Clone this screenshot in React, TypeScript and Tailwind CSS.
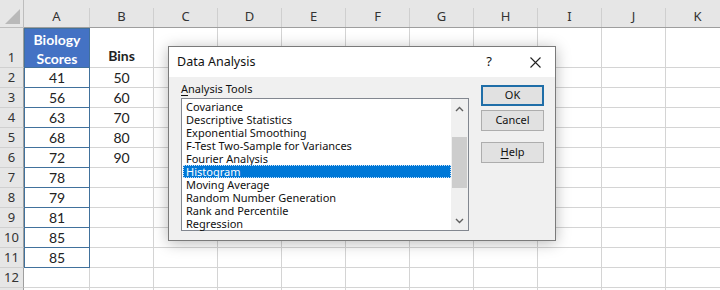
const cols = ["A", "B", "C", "D", "E", "F", "G", "H", "I", "J", "K"];
const colA = ["41", "56", "63", "68", "72", "78", "79", "81", "85", "85"];
const colB = ["50", "60", "70", "80", "90"];
const tools = [
  "Covariance",
  "Descriptive Statistics",
  "Exponential Smoothing",
  "F-Test Two-Sample for Variances",
  "Fourier Analysis",
  "Histogram",
  "Moving Average",
  "Random Number Generation",
  "Rank and Percentile",
  "Regression",
];

function Chevron({ up }: { up?: boolean }) {
  return (
    <svg width="9" height="6" viewBox="0 0 9 6" fill="none" stroke="#606060" strokeWidth="1.4">
      {up ? <path d="M1 5l3.5-3.5L8 5" /> : <path d="M1 1l3.5 3.5L8 1" />}
    </svg>
  );
}

function Sheet() {
  const rows = Array.from({ length: 13 }, (_, i) => i + 1);
  return (
    <div className="flex flex-col font-['Lato','Liberation_Sans',sans-serif] text-[14px] text-[#222]">
      {/* column headers */}
      <div className="flex h-[28px] shrink-0">
        <div className="relative w-[24px] shrink-0 border-r border-b border-[#bdbdbd] bg-[#e6e6e6]">
          <svg className="absolute right-[3px] bottom-[3px]" width="15" height="15" viewBox="0 0 15 15">
            <path d="M15 0V15H0Z" fill="#b9b9b9" />
          </svg>
        </div>
        {cols.map((c, i) => (
          <div
            key={c}
            className={`flex shrink-0 items-end border-b border-[#9e9e9e] bg-[#e6e6e6] font-['Noto_Sans',sans-serif] text-[13px] text-[#333] ${
              i === 0 ? "w-[66px]" : "w-[64px]"
            }`}
          >
            <div className="flex h-[19px] w-full items-center justify-center border-r border-[#cfcfcf] pb-[2px]">
              {c}
            </div>
          </div>
        ))}
      </div>
      {rows.map((r) => (
        <div key={r} className={`flex shrink-0 ${r === 1 ? "h-[40px]" : "h-[20px]"}`}>
          <div className="flex w-[24px] shrink-0 items-end justify-center border-r border-b border-r-[#9e9e9e] border-b-[#d0d0d0] bg-[#e6e6e6] pb-[1px] font-['Noto_Sans',sans-serif] text-[13px] leading-[18px] text-[#333]">
            {r <= 12 ? r : ""}
          </div>
          {cols.map((c, i) => {
            const w = i === 0 ? "w-[66px]" : "w-[64px]";
            if (i === 0 && r === 1) {
              return (
                <div
                  key={c}
                  className="flex w-[66px] shrink-0 flex-col items-center justify-center border border-[#41719c] bg-[#4472c4] pt-[1px] text-[14px] leading-[19px] font-bold text-white"
                >
                  <span>Biology</span>
                  <span>Scores</span>
                </div>
              );
            }
            if (i === 0 && r <= 11) {
              return (
                <div
                  key={c}
                  className="flex w-[66px] shrink-0 items-center justify-center border-x border-b border-[#41719c]"
                >
                  {colA[r - 2]}
                </div>
              );
            }
            if (i === 1 && r === 1) {
              return (
                <div
                  key={c}
                  className="flex w-[64px] shrink-0 items-end justify-center border-r border-b border-[#d4d4d4] pb-[1px] font-bold"
                >
                  Bins
                </div>
              );
            }
            return (
              <div
                key={c}
                className={`flex ${w} shrink-0 items-center justify-center border-r border-b border-[#d4d4d4]`}
              >
                {i === 1 && r >= 2 && r <= 6 ? colB[r - 2] : ""}
              </div>
            );
          })}
        </div>
      ))}
    </div>
  );
}

function Dialog() {
  return (
    <div className="absolute left-[168px] top-[46px] flex h-[195px] w-[388px] flex-col border border-[#7a7a7a] bg-[#f0f0f0] font-['Noto_Sans',sans-serif] text-[#111] shadow-[0_2px_14px_rgba(0,0,0,0.28)]">
      <div className="flex h-[30px] shrink-0 items-center bg-white pl-[8px] pr-[14px]">
        <span className="text-[12.5px]">Data Analysis</span>
        <span className="ml-auto mr-[38px] text-[13px]">?</span>
        <svg width="11" height="11" viewBox="0 0 11 11" stroke="#222" strokeWidth="1.1">
          <path d="M0.5 0.5l10 10M10.5 0.5l-10 10" />
        </svg>
      </div>
      <div className="flex pl-[12px] pt-[3px]">
        <div className="flex w-[288px] flex-col">
          <div className="h-[18px] text-[11px] leading-[17px]">
            <span className="underline underline-offset-2">A</span>nalysis Tools
          </div>
          <div className="flex h-[133px] border border-[#828790] bg-white">
            <div className="flex flex-1 flex-col pl-[1px] pt-[1px] text-[11px] leading-[13px]">
              {tools.map((t) =>
                t === "Histogram" ? (
                  <div
                    key={t}
                    className="h-[13px] border border-dotted border-[#cfe3f7] bg-[#0078d7] pl-[2px] leading-[11px] text-white"
                  >
                    {t}
                  </div>
                ) : (
                  <div key={t} className="h-[13px] pl-[3px]">
                    {t}
                  </div>
                )
              )}
            </div>
            <div className="flex w-[17px] shrink-0 flex-col items-center bg-[#f0f0f0] py-[1px]">
              <div className="flex h-[17px] items-center justify-center">
                <Chevron up />
              </div>
              <div className="mt-[20px] h-[51px] w-[15px] bg-[#cdcdcd]" />
              <div className="mt-auto flex h-[17px] items-center justify-center">
                <Chevron />
              </div>
            </div>
          </div>
        </div>
        <div className="ml-[12px] mt-[5px] flex w-[63px] flex-col text-[11px]">
          <button className="flex h-[21px] items-center justify-center border-2 border-[#1f6ea8] bg-[#e1e1e1]">
            OK
          </button>
          <button className="mt-[4px] flex h-[21px] items-center justify-center border border-[#adadad] bg-[#e1e1e1]">
            Cancel
          </button>
          <button className="mt-[11px] flex h-[21px] items-center justify-center border border-[#adadad] bg-[#e1e1e1]">
            <span>
              <span className="underline underline-offset-2">H</span>elp
            </span>
          </button>
        </div>
      </div>
    </div>
  );
}

export default function App() {
  return (
    <div className="relative h-[290px] w-[720px] overflow-hidden bg-white">
      <Sheet />
      <Dialog />
    </div>
  );
}
